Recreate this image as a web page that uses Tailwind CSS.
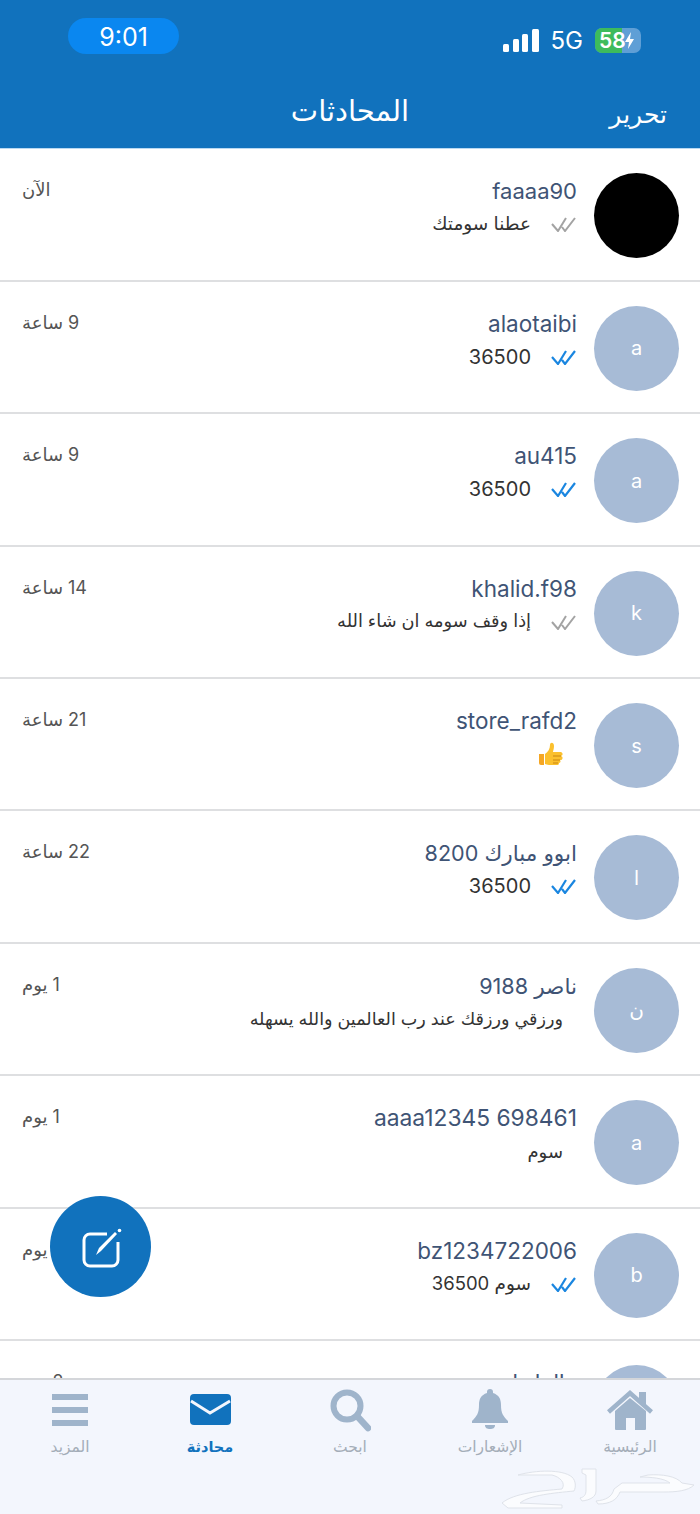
<!DOCTYPE html>
<html lang="ar" dir="rtl">
<head>
  <meta charset="UTF-8">
  <title>المحادثات</title>
  <script src="https://cdn.jsdelivr.net/npm/@tailwindcss/browser@4"></script>
</head>
<body class="bg-white font-['Inter','DejaVu_Sans',sans-serif]">
<div class="relative w-[700px] h-[1514px] overflow-hidden flex flex-col">

  <!-- Header -->
  <header class="h-[149px] shrink-0 bg-[#1172bd] border-b border-[#b9d9f2] text-white" dir="ltr">
    <div class="h-[76px] flex items-start pl-[68px] pr-[59px]">
      <div class="mt-[18px] w-[111px] h-[36px] rounded-full bg-[#0a87f0] flex items-center justify-center text-[25px] font-normal pt-[3px]">9:01</div>
      <div class="ml-auto mt-[28px] flex items-center">
        <svg width="36" height="24" viewBox="0 0 36 24" fill="#fff">
          <rect x="0" y="15" width="6" height="8" rx="1.5"/><rect x="10" y="10" width="6" height="13" rx="1.5"/><rect x="19" y="5" width="6" height="18" rx="1.5"/><rect x="29" y="0" width="7" height="23" rx="1.5"/>
        </svg>
        <span class="ml-[12px] text-[24px] leading-[24px]">5G</span>
        <div class="relative ml-[12px] w-[46px] h-[25px] rounded-[7px] bg-[#5f9fd6] overflow-hidden">
          <div class="w-[27px] h-full bg-[#3dbb5c]"></div>
          <span class="absolute left-[4px] top-0 text-[21px] leading-[25px] font-semibold">58</span>
          <svg class="absolute left-[29px] top-[4px]" width="11" height="17" viewBox="0 0 11 17" fill="#fff"><path d="M7 0 1 10h4l-1 7 6-10H6z"/></svg>
        </div>
      </div>
    </div>
    <div class="relative h-[72px] flex items-start justify-center">
      <h1 class="mt-[15px] text-[29px] leading-[40px] font-medium" dir="rtl">المحادثات</h1>
      <span class="absolute right-[33px] top-[18px] text-[25px] leading-[40px]" dir="rtl">تحرير</span>
    </div>
  </header>

  <!-- Conversations -->
  <main class="flex-1 overflow-hidden">
    <div class="h-[132.9px] border-b-2 border-[#dedfe1] flex items-start pt-[24px] pr-[21px] pl-[22px]">
      <div class="w-[85px] h-[85px] rounded-full bg-black shrink-0"></div>
      <div class="mr-[17px]">
        <div class="text-[22px] leading-[36px] text-[#3f5475]">faaaa90</div>
        <div class="flex items-center h-[30px] text-[18.5px] text-[#333]">
          <svg class="mr-[1px] ml-[20px]" width="25" height="16" viewBox="0 0 25 16" fill="none" stroke="#a3a3a3" stroke-width="2"><path d="M1 8l6 7L15 2M11 11l3 4L24 2"/></svg>
          <span>عطنا سومتك</span>
        </div>
      </div>
      <div class="mr-auto text-[18px] leading-[33px] text-[#555]">الآن</div>
    </div>

    <div class="h-[132.4px] border-b-2 border-[#dedfe1] flex items-start pt-[24px] pr-[21px] pl-[22px]">
      <div class="w-[85px] h-[85px] rounded-full bg-[#a7bbd6] shrink-0 flex items-center justify-center text-white text-[20px]">a</div>
      <div class="mr-[17px]">
        <div class="text-[22.5px] leading-[36px] text-[#3f5475]">alaotaibi</div>
        <div class="flex items-center h-[30px] text-[20px] text-[#333]">
          <svg class="mr-[1px] ml-[20px]" width="25" height="16" viewBox="0 0 25 16" fill="none" stroke="#1a86e0" stroke-width="2.2"><path d="M1 8l6 7L15 2M11 11l3 4L24 2"/></svg>
          <span>36500</span>
        </div>
      </div>
      <div class="mr-auto text-[18px] leading-[33px] text-[#555]">9 ساعة</div>
    </div>

    <div class="h-[132.4px] border-b-2 border-[#dedfe1] flex items-start pt-[24px] pr-[21px] pl-[22px]">
      <div class="w-[85px] h-[85px] rounded-full bg-[#a7bbd6] shrink-0 flex items-center justify-center text-white text-[20px]">a</div>
      <div class="mr-[17px]">
        <div class="text-[22.5px] leading-[36px] text-[#3f5475]">au415</div>
        <div class="flex items-center h-[30px] text-[20px] text-[#333]">
          <svg class="mr-[1px] ml-[20px]" width="25" height="16" viewBox="0 0 25 16" fill="none" stroke="#1a86e0" stroke-width="2.2"><path d="M1 8l6 7L15 2M11 11l3 4L24 2"/></svg>
          <span>36500</span>
        </div>
      </div>
      <div class="mr-auto text-[18px] leading-[33px] text-[#555]">9 ساعة</div>
    </div>

    <div class="h-[132.4px] border-b-2 border-[#dedfe1] flex items-start pt-[24px] pr-[21px] pl-[22px]">
      <div class="w-[85px] h-[85px] rounded-full bg-[#a7bbd6] shrink-0 flex items-center justify-center text-white text-[20px]">k</div>
      <div class="mr-[17px]">
        <div class="text-[22.5px] leading-[36px] text-[#3f5475]">khalid.f98</div>
        <div class="flex items-center h-[30px] text-[17.800px] text-[#333]">
          <svg class="mr-[1px] ml-[20px]" width="25" height="16" viewBox="0 0 25 16" fill="none" stroke="#a3a3a3" stroke-width="2"><path d="M1 8l6 7L15 2M11 11l3 4L24 2"/></svg>
          <span>إذا وقف سومه ان شاء الله</span>
        </div>
      </div>
      <div class="mr-auto text-[18px] leading-[33px] text-[#555]">14 ساعة</div>
    </div>

    <div class="h-[132.4px] border-b-2 border-[#dedfe1] flex items-start pt-[24px] pr-[21px] pl-[22px]">
      <div class="w-[85px] h-[85px] rounded-full bg-[#a7bbd6] shrink-0 flex items-center justify-center text-white text-[20px]">s</div>
      <div class="mr-[17px]">
        <div class="text-[22.5px] leading-[36px] text-[#3f5475]">store_rafd2</div>
        <div class="flex items-center h-[30px] pr-[14px]">
          <svg width="25" height="25" viewBox="0 0 25 25">
            <path d="M1 12h5v11H3a2 2 0 0 1-2-2z" fill="#f5a623"/>
            <path d="M7 12c3-2 5-5 5-9 0-3 4-3 4 1 0 3-1 5-1 6h7a2 2 0 0 1 1 4 2 2 0 0 1-1 4 2 2 0 0 1-1 3c0 2-1 2-3 2H11c-2 0-3-1-4-1z" fill="#fbc02d"/>
            <path d="M15 14h8M15 18h7M15 21h5" stroke="#c98512" stroke-width="1.2" fill="none"/>
          </svg>
        </div>
      </div>
      <div class="mr-auto text-[18px] leading-[33px] text-[#555]">21 ساعة</div>
    </div>

    <div class="h-[132.4px] border-b-2 border-[#dedfe1] flex items-start pt-[24px] pr-[21px] pl-[22px]">
      <div class="w-[85px] h-[85px] rounded-full bg-[#a7bbd6] shrink-0 flex items-center justify-center text-white text-[20px]">ا</div>
      <div class="mr-[17px]">
        <div class="text-[21.6px] leading-[36px] text-[#3f5475]">ابوو مبارك 8200</div>
        <div class="flex items-center h-[30px] text-[20px] text-[#333]">
          <svg class="mr-[1px] ml-[20px]" width="25" height="16" viewBox="0 0 25 16" fill="none" stroke="#1a86e0" stroke-width="2.2"><path d="M1 8l6 7L15 2M11 11l3 4L24 2"/></svg>
          <span>36500</span>
        </div>
      </div>
      <div class="mr-auto text-[18px] leading-[33px] text-[#555]">22 ساعة</div>
    </div>

    <div class="h-[132.4px] border-b-2 border-[#dedfe1] flex items-start pt-[24px] pr-[21px] pl-[22px]">
      <div class="w-[85px] h-[85px] rounded-full bg-[#a7bbd6] shrink-0 flex items-center justify-center text-white text-[20px]">ن</div>
      <div class="mr-[17px]">
        <div class="text-[21.6px] leading-[36px] text-[#3f5475]">ناصر 9188</div>
        <div class="flex items-center h-[30px] pr-[14px] text-[17.6px] text-[#333]">
          <span>ورزقي ورزقك عند رب العالمين والله يسهله</span>
        </div>
      </div>
      <div class="mr-auto text-[18px] leading-[33px] text-[#555]">1 يوم</div>
    </div>

    <div class="h-[132.4px] border-b-2 border-[#dedfe1] flex items-start pt-[24px] pr-[21px] pl-[22px]">
      <div class="w-[85px] h-[85px] rounded-full bg-[#a7bbd6] shrink-0 flex items-center justify-center text-white text-[20px]">a</div>
      <div class="mr-[17px]">
        <div class="text-[22.8px] leading-[36px] text-[#3f5475]">aaaa12345 698461</div>
        <div class="flex items-center h-[30px] pr-[14px] text-[18px] text-[#333]">
          <span>سوم</span>
        </div>
      </div>
      <div class="mr-auto text-[18px] leading-[33px] text-[#555]">1 يوم</div>
    </div>

    <div class="h-[132.4px] border-b-2 border-[#dedfe1] flex items-start pt-[24px] pr-[21px] pl-[22px]">
      <div class="w-[85px] h-[85px] rounded-full bg-[#a7bbd6] shrink-0 flex items-center justify-center text-white text-[20px]">b</div>
      <div class="mr-[17px]">
        <div class="text-[22.5px] leading-[36px] text-[#3f5475]">bz1234722006</div>
        <div class="flex items-center h-[30px] text-[18.5px] text-[#333]">
          <svg class="mr-[1px] ml-[20px]" width="25" height="16" viewBox="0 0 25 16" fill="none" stroke="#1a86e0" stroke-width="2.2"><path d="M1 8l6 7L15 2M11 11l3 4L24 2"/></svg>
          <span>سوم 36500</span>
        </div>
      </div>
      <div class="mr-auto text-[18px] leading-[33px] text-[#555]">1 يوم</div>
    </div>

    <div class="h-[132.4px] flex items-start pt-[24px] pr-[21px] pl-[22px]">
      <div class="w-[85px] h-[85px] rounded-full bg-[#a7bbd6] shrink-0"></div>
      <div class="mr-[17px]">
        <div class="text-[22.5px] leading-[36px] text-[#3f5475]">abdulla</div>
      </div>
      <div class="mr-auto text-[18px] leading-[33px] text-[#555]">2 يوم</div>
    </div>
  </main>

  <!-- Bottom tabs -->
  <nav class="relative h-[136px] shrink-0 bg-[#f3f6fd] border-t-2 border-[#d4d6da] grid grid-cols-5 text-[15.5px] text-[#a4adb8]" dir="ltr">
    <div class="flex flex-col items-center">
      <svg class="mt-[13px]" width="38" height="40" viewBox="0 0 38 40" fill="#9fb4cb"><rect x="1" y="1" width="36" height="6"/><rect x="1" y="14" width="36" height="6"/><rect x="1" y="27" width="36" height="6"/></svg>
      <span class="mt-[1px] leading-[26px]" dir="rtl">المزيد</span>
    </div>
    <div class="flex flex-col items-center">
      <svg class="mt-[13px]" width="42" height="40" viewBox="0 0 42 40"><rect x="1" y="1" width="41" height="31" rx="4" fill="#1172bd"/><path d="M2 8l19 12L41 8" fill="none" stroke="#f3f6fd" stroke-width="3"/></svg>
      <span class="mt-[1px] leading-[26px] text-[14.5px] font-bold text-[#1172bd]" dir="rtl">محادثة</span>
    </div>
    <div class="flex flex-col items-center">
      <svg class="mt-[9px]" width="42" height="44" viewBox="0 0 42 44" fill="none" stroke="#9fb4cb"><circle cx="18" cy="17" r="13.5" stroke-width="6"/><path d="M28 27l11 12" stroke-width="6.5" stroke-linecap="round"/></svg>
      <span class="mt-[1px] leading-[26px]" dir="rtl">ابحث</span>
    </div>
    <div class="flex flex-col items-center">
      <svg class="mt-[8px]" width="38" height="45" viewBox="0 0 38 45" fill="#9fb4cb"><path d="M19 1a3 3 0 0 1 3 3v1c6 2 8 6 8 12 0 8 2 11 7 16v2H1v-2c5-5 7-8 7-16 0-6 2-10 8-12V4a3 3 0 0 1 3-3z"/><path d="M14 37h10c0 3-2 4-5 4s-5-1-5-4z"/></svg>
      <span class="mt-[1px] leading-[26px]" dir="rtl">الإشعارات</span>
    </div>
    <div class="flex flex-col items-center">
      <svg class="mt-[10px]" width="46" height="43" viewBox="0 0 46 43" fill="#9fb4cb"><path d="M23 8 8 21v18a1 1 0 0 0 1 1h10V28h9v12h10a1 1 0 0 0 1-1V21z"/><rect x="32" y="2" width="7" height="12"/><path d="M1.500 22 23 3l21.500 19" fill="none" stroke="#9fb4cb" stroke-width="4.500"/></svg>
      <span class="mt-[1px] leading-[26px]" dir="rtl">الرئيسية</span>
    </div>

    <!-- Watermark -->
    <svg class="absolute left-[500px] top-[87px]" width="196" height="44" viewBox="0 0 196 44" fill="#fbfcfe" stroke="#dfe3ea" stroke-width="1">
      <path d="M2 36C14 26 40 24 62 22c4-6-2-12-10-14L18 8c18-5 44-6 54 2 4 4 4 10 2 14-20 2-44 4-54 12l42 2v3H8z"/>
      <path d="M82 2h14v22c0 6-6 9-14 10l-2-3c4-1 6-3 6-8V8l-4-2z"/>
      <path d="M122 16h48c-6-5-20-6-30-6l8-2c14-1 28 1 34 8l12 2c-6 6-18 7-30 7h-44c-3 8-10 12-22 12l-2-3c10-1 16-4 18-12z"/>
    </svg>
  </nav>

  <!-- Compose button -->
  <button class="absolute left-[50px] top-[1196px] w-[101px] h-[101px] rounded-full bg-[#1172bd] flex items-center justify-center">
    <svg width="42" height="42" viewBox="0 0 42 42" fill="none" stroke="#fff">
      <path d="M27 8H10a6 6 0 0 0-6 6v20a6 6 0 0 0 6 6h22a6 6 0 0 0 6-6V16" stroke-width="3"/>
      <path d="M16 29 19 22 35 6 37 8 21 25z" fill="#fff" stroke="none"/>
      <circle cx="39.500" cy="4.500" r="1.800" fill="#fff" stroke="none"/>
    </svg>
  </button>
</div>
</body>
</html>
